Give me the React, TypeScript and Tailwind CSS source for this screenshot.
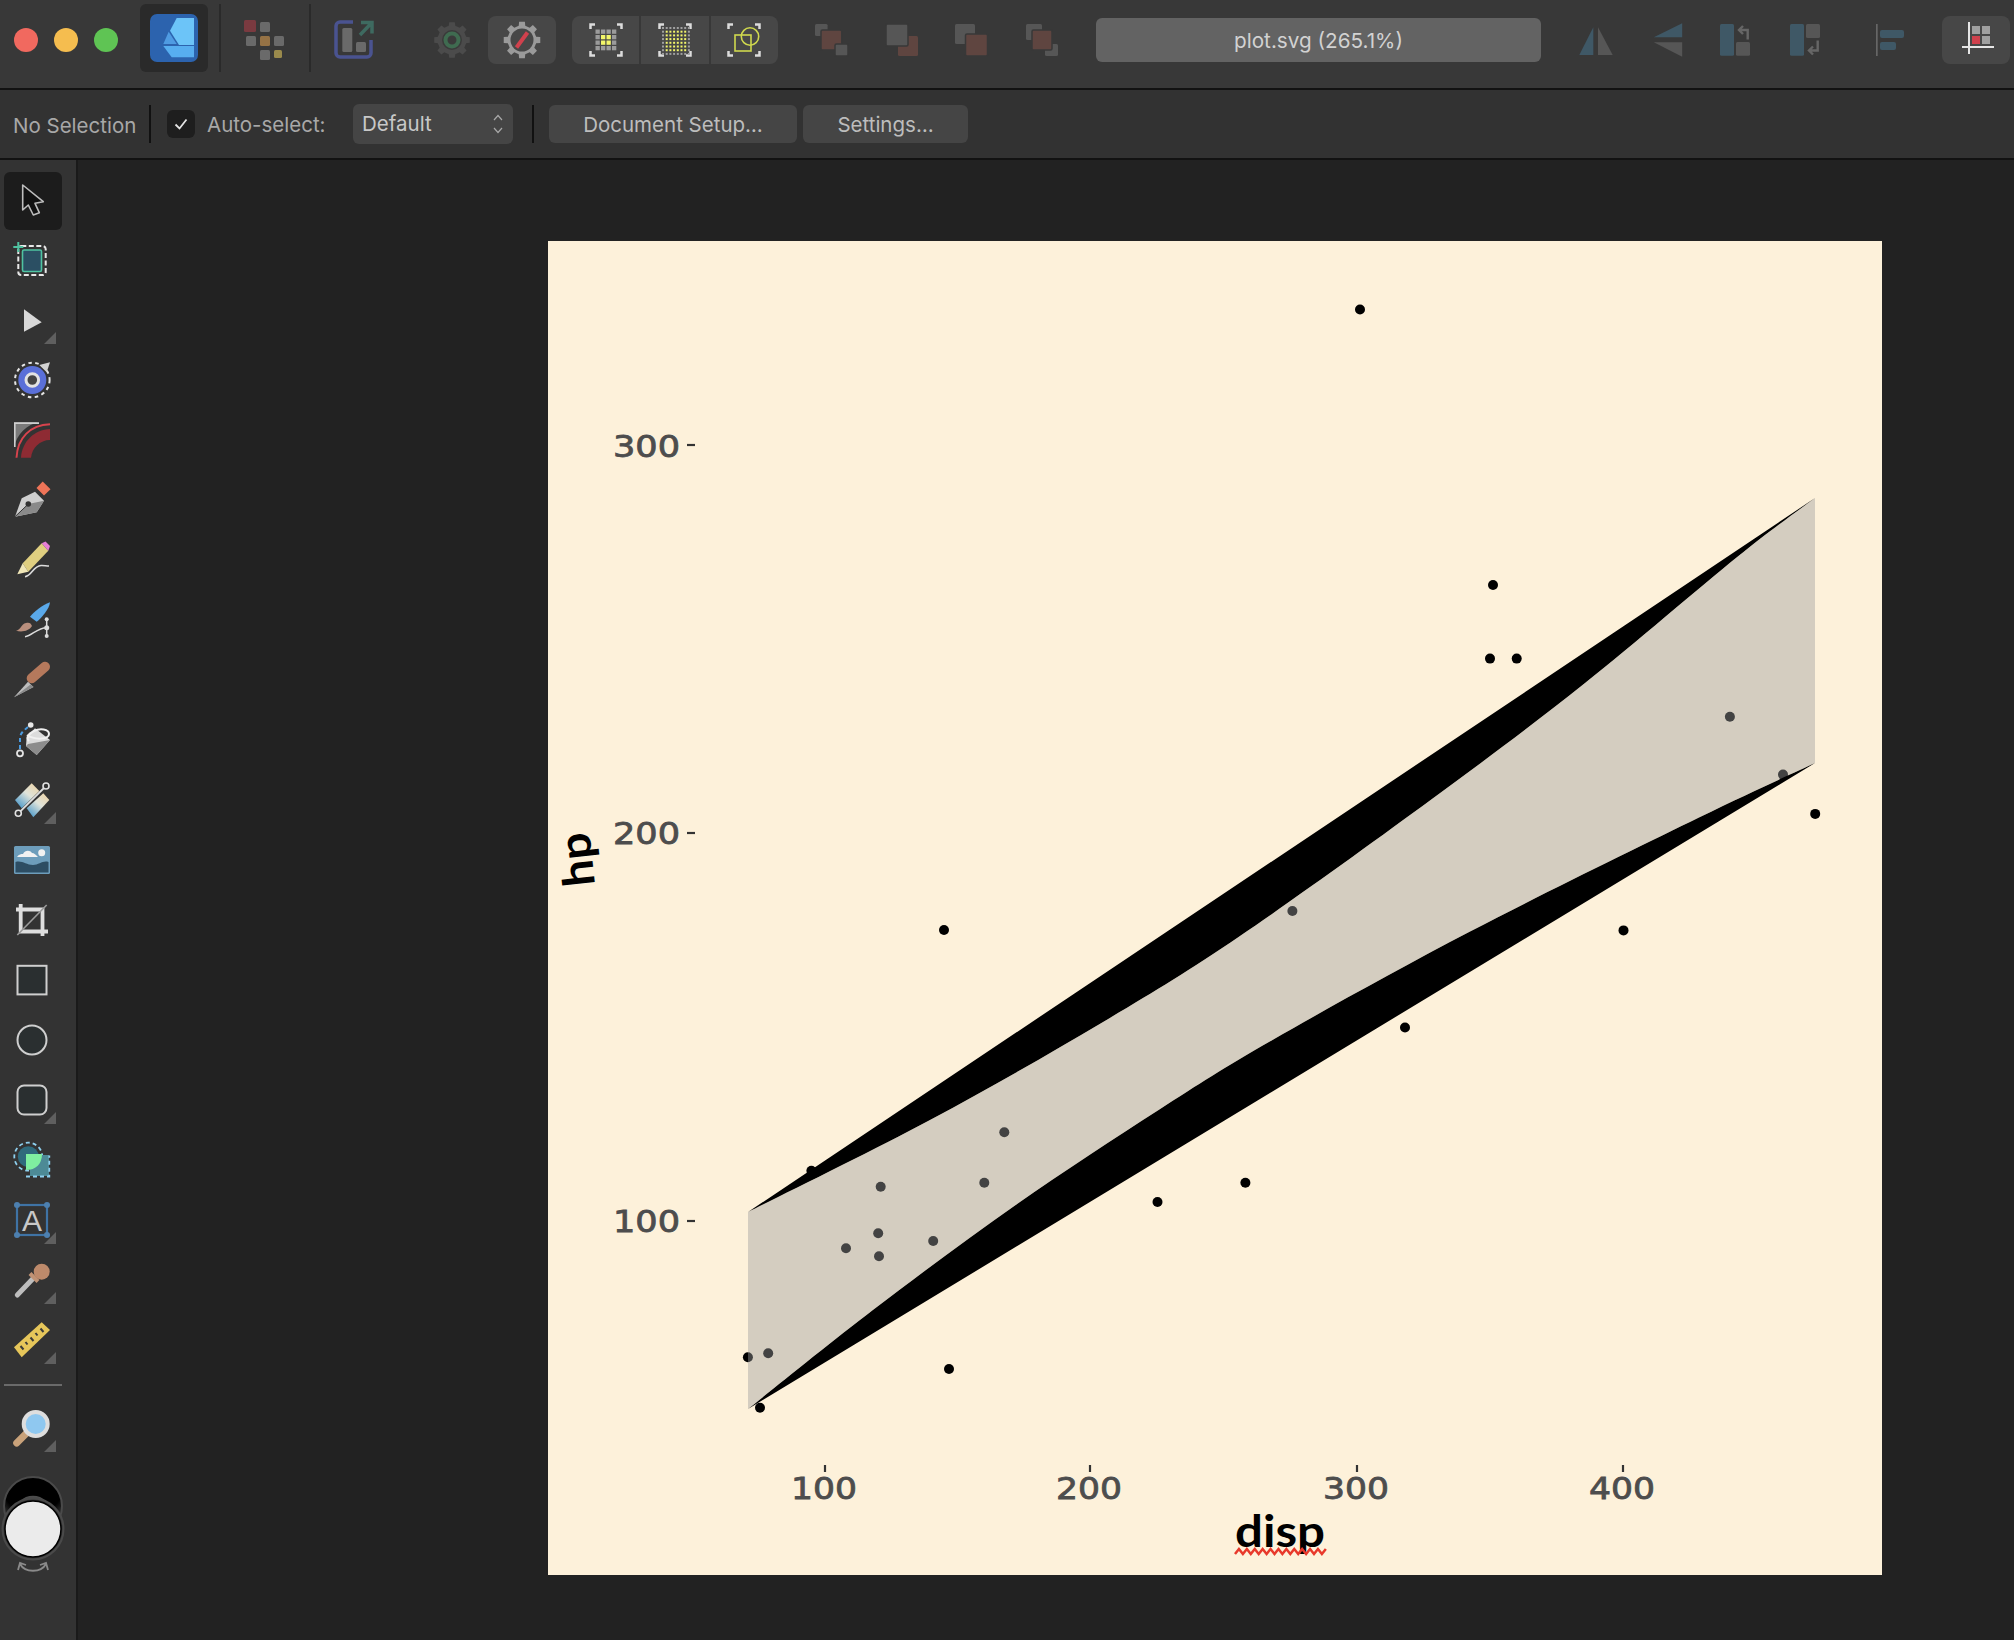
import React from "react";

const Ico = ({ children, size = 40 }: { children: React.ReactNode; size?: number }) => (
  <svg width={size} height={size} viewBox="0 0 40 40" fill="none" className="shrink-0 block">
    {children}
  </svg>
);

function gearPath(cx: number, cy: number, r: number, R: number, teeth: number) {
  const pts: string[] = [];
  const step = (Math.PI * 2) / teeth;
  for (let i = 0; i < teeth; i++) {
    const a = i * step - Math.PI / 2;
    const w = step * 0.2;
    const w2 = step * 0.29;
    const arr: [number, number][] = [
      [r, a - w2],
      [R, a - w],
      [R, a + w],
      [r, a + w2],
    ];
    arr.forEach(([rad, an]) => pts.push(`${(cx + rad * Math.cos(an)).toFixed(2)} ${(cy + rad * Math.sin(an)).toFixed(2)}`));
  }
  return "M" + pts.join("L") + "Z";
}

const Corners = () => (
  <g stroke="#dcdcdc" strokeWidth="2.5">
    <path d="M4.5 9V4.5H9M31 4.5H35.5V9M35.5 31V35.5H31M9 35.5H4.5V31" />
  </g>
);

const Grid4 = () => {
  const cells: React.ReactNode[] = [];
  for (let r = 0; r < 4; r++)
    for (let c = 0; c < 4; c++) {
      const y = (r === 1 || r === 2) && (c === 1 || c === 2);
      cells.push(<rect key={`${r}-${c}`} x={9.5 + c * 5.5} y={9.5 + r * 5.5} width="4.3" height="4.3" fill={y ? "#f2f56a" : "#9b9b9b"} />);
    }
  return <>{cells}</>;
};

const Grid8 = () => {
  const cells: React.ReactNode[] = [];
  for (let r = 0; r < 8; r++)
    for (let c = 0; c < 8; c++) {
      const edge = r === 0 || r === 7 || c === 0 || c === 7;
      cells.push(<rect key={`${r}-${c}`} x={7 + c * 3.7} y={7 + r * 3.7} width="2" height="2" fill={edge ? "#a0a0a0" : "#f2f56a"} />);
    }
  return <>{cells}</>;
};

const GRAY = "#565656";
const RED = "#5f4540";
const BLUE = "#3f5866";

const tools: { icon: React.ReactNode; tri?: boolean; active?: boolean }[] = [
  {
    active: true,
    icon: <path d="M10.7 5V30L16.3 25L21.3 35L27.3 32.7L23 23.3L31.3 21.7Z" fill="#111" stroke="#bdbdbd" strokeWidth="1.6" strokeLinejoin="round" />,
  },
  {
    icon: (
      <>
        <rect x="6.3" y="6" width="27.4" height="29" rx="3" stroke="#e8e8e8" strokeWidth="2" strokeDasharray="5 2.5" />
        <rect x="10.5" y="10" width="19" height="21.5" rx="1.5" fill="#2b4f63" stroke="#4fc3a1" strokeWidth="1.6" />
        <path d="M6.3 2V12M1.3 7H11.3" stroke="#4fc3a1" strokeWidth="2" />
      </>
    ),
  },
  { tri: true, icon: <path d="M12 9.3V31.7L29.7 22.3Z" fill="#d8d8d8" /> },
  {
    icon: (
      <>
        <circle cx="20.3" cy="20" r="17.3" stroke="#e4e4e4" strokeWidth="2" strokeDasharray="3.5 3.5" />
        <circle cx="20.3" cy="20" r="14" fill="#5a6fd8" />
        <circle cx="20.3" cy="20" r="6.3" fill="#444" stroke="#e2e2e2" strokeWidth="3" />
        <path d="M27.3 5L38 2.3L34.7 12.3Z" fill="#d2d2d2" />
      </>
    ),
  },
  {
    icon: (
      <>
        <path d="M2 2.3H27.3C15 4 5 14 2 27.3Z" fill="#7a7a7a" />
        <path d="M2.8 27V3.1H27" stroke="#cfcfcf" strokeWidth="1.6" />
        <path d="M9 37.7C10 22 22 9.5 38 9V20C28 20 20 28 19 37.7Z" fill="#8e2b33" />
        <path d="M4.5 37.7C5.5 18 18 5 38 4.3" stroke="#d8434d" strokeWidth="2" />
      </>
    ),
  },
  {
    icon: (
      <>
        <path d="M3 36.7L9.7 18.3L23 11.7L32 20.7L24.7 32.3Z" fill="#cfcfcf" />
        <path d="M3 36.7L16.3 24L32 20.7L24.7 32.3Z" fill="#8a8a8a" />
        <path d="M3 36.7L16.3 24" stroke="#333" strokeWidth="1" />
        <circle cx="16.3" cy="24" r="2.8" fill="#333" />
        <path d="M30.7 1.5L38.5 9.3L32 15.5L24.5 8Z" fill="#ee7458" />
      </>
    ),
  },
  {
    icon: (
      <>
        <path d="M10.7 23.3L29.7 3.3L36.3 10.7L16.3 31.7Z" fill="#e0cf80" />
        <path d="M10.7 23.3L16.3 31.7L5.3 34.3Z" fill="#f1e7b8" />
        <path d="M29.7 3.3L33.5 1.5L38 6L36.3 10.7Z" fill="#e77fd6" />
        <path d="M13 36.7C20 36 21 26 29 25.5C32 25.3 34 26 37 26" stroke="#dcdcdc" strokeWidth="1.6" />
      </>
    ),
  },
  {
    icon: (
      <>
        <path d="M18 16.7C22 12 30 5 38 2.3C37.5 6 36 9 33 13C30 17 27 20 24.7 21.7Z" fill="#5aa9ea" />
        <path d="M4 30.7C9 30 9 24 14 23C17 22 19 23 20 26C17 31 10 32.5 4 30.7Z" fill="#b98f7d" />
        <path d="M34.7 19.3V36M13 36.7C20 36 25 27.7 34.7 27.7" stroke="#dcdcdc" strokeWidth="1.5" />
        <circle cx="34.7" cy="19.3" r="2" fill="#dcdcdc" />
        <circle cx="34.7" cy="27.7" r="2.5" fill="#dcdcdc" />
        <circle cx="34.7" cy="36" r="2" fill="#dcdcdc" />
      </>
    ),
  },
  {
    icon: (
      <>
        <path d="M19.7 18.3L33 6.7" stroke="#b5795c" strokeWidth="10" strokeLinecap="round" />
        <path d="M2 37.3L16 21.7L21.5 27Z" fill="#bdbdbd" />
        <path d="M2 37.3L18.5 24.5L21.5 27Z" fill="#8a8a8a" />
      </>
    ),
  },
  {
    icon: (
      <>
        <path d="M14.7 16.7L23 8.3L38 20L24.7 35L14 26Z" fill="#dcdcdc" />
        <path d="M16 24L38 20L24.7 35L14 26Z" fill="#8c8c8c" />
        <path d="M15 15C22 20 37 20 37 14C37 9 28 8 22 11C16 14 14 18 17 21" stroke="#f0f0f0" strokeWidth="2" />
        <circle cx="8" cy="33.3" r="3" fill="#333" stroke="#e4e4e4" strokeWidth="1.8" />
        <circle cx="18.7" cy="5" r="2.8" fill="#e8e8e8" />
        <path d="M8 29V18C8 14 11 11 16 7" stroke="#4a9be0" strokeWidth="2" strokeDasharray="4 3" />
      </>
    ),
  },
  {
    tri: true,
    icon: (
      <>
        <defs>
          <linearGradient id="gr1" x1="0.9" y1="0" x2="0.1" y2="1">
            <stop offset="0" stopColor="#ecd3a6" />
            <stop offset="0.45" stopColor="#dfe3da" />
            <stop offset="1" stopColor="#3f93c8" />
          </linearGradient>
        </defs>
        <path d="M3 20L19.7 3.3L27.3 11L9.7 28.3Z" fill="url(#gr1)" />
        <path d="M14.7 28.3L31.3 13.3L37.3 20L21.3 37.3Z" fill="url(#gr1)" />
        <path d="M6.3 33.3L34 6" stroke="#dedede" strokeWidth="1.8" />
        <circle cx="6.3" cy="33.3" r="3" fill="#333" stroke="#e2e2e2" strokeWidth="1.6" />
        <circle cx="34" cy="6" r="3" fill="#333" stroke="#e2e2e2" strokeWidth="1.6" />
      </>
    ),
  },
  {
    icon: (
      <>
        <rect x="2" y="6" width="36" height="28" rx="1.5" fill="#6d9dbb" />
        <path d="M5 17C7 14 9 14 11 14C13 10 18 10 20 13C22 13 24 15 26 17Z" fill="#f2f2f2" />
        <circle cx="29.7" cy="12.7" r="3.5" fill="#f2f2f2" />
        <path d="M3.5 22C10 20 14 25 21 25C27 25 31 20 36.5 22V32.5H3.5Z" fill="#2d4d63" />
      </>
    ),
  },
  {
    icon: (
      <>
        <path d="M8.7 4V31.5H36M4 9.5H30.5V36" stroke="#dedede" strokeWidth="3.8" />
        <path d="M5.3 35L34.7 5" stroke="#9a9a9a" strokeWidth="1.6" />
      </>
    ),
  },
  { icon: <rect x="5.5" y="5.8" width="29" height="28.6" fill="#2a2f30" stroke="#cfcfcf" strokeWidth="2" /> },
  { icon: <circle cx="20" cy="20" r="14.5" fill="#2a2f30" stroke="#cfcfcf" strokeWidth="2" /> },
  { tri: true, icon: <rect x="5.5" y="5.5" width="29" height="29" rx="6.5" fill="#2a2f30" stroke="#cfcfcf" strokeWidth="2" /> },
  {
    icon: (
      <>
        <circle cx="16.3" cy="16.7" r="14" stroke="#8ed0ef" strokeWidth="1.8" strokeDasharray="4 3" />
        <circle cx="16.3" cy="16.7" r="10.5" fill="#2f6a7c" />
        <path d="M18 36V25C25 24 29 20 30 15H37V36Z" fill="#4d8a96" />
        <path d="M14 36.5H37.3V15.5" stroke="#8ed0ef" strokeWidth="1.8" strokeDasharray="4 3" />
        <path d="M14 14H30C30 24 24 30 14 30Z" fill="#7fefa0" />
      </>
    ),
  },
  {
    tri: true,
    icon: (
      <>
        <rect x="5" y="5" width="30" height="30" stroke="#3f73a5" strokeWidth="2.2" />
        <circle cx="5" cy="5" r="3" fill="#4d80b0" />
        <circle cx="35" cy="5" r="3" fill="#4d80b0" />
        <circle cx="5" cy="35" r="3" fill="#4d80b0" />
        <circle cx="35" cy="35" r="3" fill="#4d80b0" />
        <text x="20" y="30.5" textAnchor="middle" fontFamily="'Liberation Sans', sans-serif" fontSize="30" fill="#c8c8c8">A</text>
      </>
    ),
  },
  {
    tri: true,
    icon: (
      <>
        <path d="M5.3 35L21.3 18.3" stroke="#bdbdbd" strokeWidth="5" strokeLinecap="round" />
        <path d="M18 13.5L26 21.5" stroke="#c09274" strokeWidth="4" />
        <circle cx="29.7" cy="11.7" r="8" fill="#bd8a6b" />
      </>
    ),
  },
  {
    tri: true,
    icon: (
      <>
        <path d="M2 27.3L29.7 2.3L38 10L9.7 37.3Z" fill="#e6c65a" />
        <path d="M8.5 26L11.5 29.5M13.5 22L15.5 24.5M18.5 17.5L21.5 21M23.5 13L25.5 15.5M28.5 8.5L31.5 12" stroke="#3b3b3b" strokeWidth="2" />
      </>
    ),
  },
];

const Tool = ({ icon, tri, active }: { icon: React.ReactNode; tri?: boolean; active?: boolean }) => (
  <div className={`relative flex h-[58px] w-[58px] items-center justify-center rounded-md pb-[2px] pr-[2px] ${active ? "bg-[#1c1c1c]" : ""}`}>
    <Ico>{icon}</Ico>
    {tri && <Tri />}
  </div>
);

const Tri = () => (
  <svg width="12" height="12" viewBox="0 0 12 12" className="absolute left-[40px] top-[40px]">
    <path d="M12 0V12H0Z" fill="#5f5f5f" />
  </svg>
);

const Sep = () => <div className="h-[68px] w-[2px] shrink-0 bg-[#2a2a2a]" />;

function zigzag() {
  const p: string[] = [];
  for (let i = 0; i <= 23; i++) p.push(`${1235 + i * 3.95},${i % 2 ? 1549 : 1554}`);
  return p.join(" ");
}

const blackPts: [number, number][] = [
  [811.4, 1170.7], [1004.3, 1132.3], [880.7, 1186.7], [984.3, 1182.7], [878.2, 1233.3], [846, 1248.3], [879, 1256.3], [933.2, 1241],
  [747.9, 1357.3], [768.2, 1353.3], [760, 1407.7], [949, 1369], [1157.5, 1202], [1245.4, 1182.7], [1493, 585], [1490, 658.6],
  [1516.7, 658.6], [1729.9, 716.8], [1783, 774.6], [1815.2, 813.9], [1623.5, 930.4], [1405, 1027.5], [1292.4, 911], [1360, 309.5], [944, 930],
];

type P = [number, number];
const upperPts: P[] = [
  [748, 1212], [930, 1120], [1101.4, 1023], [1240, 936], [1431.3, 799.6], [1584.4, 683.6], [1737.5, 556.8], [1815, 498],
];
const lowerPts: P[] = [
  [1815, 763], [1699, 817.5], [1469.6, 931.8], [1272.5, 1040], [1158.6, 1110], [1015.7, 1205], [872.9, 1310], [748, 1409],
];

// Catmull-Rom spline through measured ribbon edge points
function spline(pts: P[]) {
  let d = "";
  for (let i = 0; i < pts.length - 1; i++) {
    const p0 = pts[Math.max(i - 1, 0)];
    const p1 = pts[i];
    const p2 = pts[i + 1];
    const p3 = pts[Math.min(i + 2, pts.length - 1)];
    const c1x = p1[0] + (p2[0] - p0[0]) / 6;
    const c1y = p1[1] + (p2[1] - p0[1]) / 6;
    const c2x = p2[0] - (p3[0] - p1[0]) / 6;
    const c2y = p2[1] - (p3[1] - p1[1]) / 6;
    d += `C${c1x.toFixed(1)} ${c1y.toFixed(1)} ${c2x.toFixed(1)} ${c2y.toFixed(1)} ${p2[0]} ${p2[1]}`;
  }
  return d;
}

const upperD = spline(upperPts);
const lowerD = spline(lowerPts);
const upperRevD = spline([...upperPts].reverse());
const lowerRevD = spline([...lowerPts].reverse());

const tickY = [
  { l: "300", y: 445, top: 457 },
  { l: "200", y: 833, top: 844 },
  { l: "100", y: 1221, top: 1232 },
];
const tickX = [
  { l: "100", x: 825 },
  { l: "200", x: 1090 },
  { l: "300", x: 1357 },
  { l: "400", x: 1623 },
];

const axisFont = "'DejaVu Sans', sans-serif";
const titleFont = "'Lato', sans-serif";

const Plot = () => (
  <svg width="1334" height="1334" viewBox="548 241 1334 1334" className="block bg-[#fdf1da]">
    <path d={`M748 1212L1815 498${upperRevD}Z`} fill="#000" />
    <path d={`M1815 763L748 1409${lowerRevD}Z`} fill="#000" />
    {blackPts.map(([x, y], i) => (
      <circle key={i} cx={x} cy={y} r="5" fill="#000" />
    ))}
    <path d={`M748 1212${upperD}L1815 763${lowerD}Z`} fill="#9d9d9d" fillOpacity="0.427" />
    {tickY.map((t) => (
      <g key={t.l}>
        <path d={`M687 ${t.y}H695`} stroke="#333" strokeWidth="2.2" />
        <text x="613" y={t.top} fontFamily={axisFont} fontSize="30" fill="#4d4d4d" stroke="#4d4d4d" strokeWidth="0.8" textLength="67" lengthAdjust="spacingAndGlyphs">
          {t.l}
        </text>
      </g>
    ))}
    {tickX.map((t) => (
      <g key={t.l}>
        <path d={`M${t.x} 1465V1472`} stroke="#333" strokeWidth="2.2" />
        <text x={t.x - 34} y="1499" fontFamily={axisFont} fontSize="30" fill="#4d4d4d" stroke="#4d4d4d" strokeWidth="0.8" textLength="66" lengthAdjust="spacingAndGlyphs">
          {t.l}
        </text>
      </g>
    ))}
    <text x="1235" y="1547" fontFamily={titleFont} fontWeight="700" fontSize="44" fill="#000" textLength="90" lengthAdjust="spacingAndGlyphs">
      disp
    </text>
    <polyline points={zigzag()} fill="none" stroke="#e8392b" strokeWidth="2.5" />
    <text transform="translate(595 885) rotate(-96)" fontFamily={titleFont} fontWeight="700" fontSize="44" fill="#000" textLength="54" lengthAdjust="spacingAndGlyphs">
      hp
    </text>
  </svg>
);

export default function App() {
  const gear1 = gearPath(20, 20, 14.5, 18, 8);
  const gear2 = gearPath(20, 20, 14.5, 18.5, 8);
  return (
    <div className="flex h-[1640px] w-[2014px] flex-col overflow-hidden bg-[#222222] font-['Inter','Liberation_Sans',sans-serif]">
      {/* Top toolbar */}
      <div className="flex h-[88px] shrink-0 items-center bg-[#383838] pb-[8px] pl-[14px]">
        <div className="flex gap-[16px]">
          <div className="h-[24px] w-[24px] rounded-full bg-[#f1695f]" />
          <div className="h-[24px] w-[24px] rounded-full bg-[#f5bd4f]" />
          <div className="h-[24px] w-[24px] rounded-full bg-[#5fc454]" />
        </div>
        <div className="ml-[22px] mt-[-4px] flex h-[68px] w-[68px] shrink-0 items-center justify-center rounded-md bg-[#2a2a2a]">
          <svg width="48" height="48" viewBox="0 0 48 48" className="block">
            <rect width="48" height="48" rx="7" fill="#2c63ae" />
            <path d="M26.7 4H44V31H29L20 16.7Z" fill="#6cc4f8" />
            <path d="M18.7 17.7L26.7 30H13.3Z" fill="#4f9be2" />
            <path d="M13.3 32H44V43.3H21.7Z" fill="#57aef0" />
          </svg>
        </div>
        <div className="ml-[11px] mt-[-4px]"><Sep /></div>
        <div className="ml-[23px]">
          <Ico>
            <rect x="0" y="0" width="12" height="12" rx="1.5" fill="#7a3a40" />
            <rect x="16" y="2" width="10" height="10" rx="1.5" fill="#6a6a6a" />
            <rect x="2" y="16" width="10" height="10" rx="1.5" fill="#6a6a6a" />
            <rect x="16" y="16" width="10" height="10" rx="1.5" fill="#957245" />
            <rect x="30" y="16" width="10" height="10" rx="1.5" fill="#6a6a6a" />
            <rect x="16" y="30" width="10" height="10" rx="1.5" fill="#6a6a6a" />
            <rect x="30" y="30" width="8" height="8" rx="1.5" fill="#9a8a4c" />
          </Ico>
        </div>
        <div className="ml-[25px] mt-[-4px]"><Sep /></div>
        <div className="ml-[23px]">
          <Ico>
            <path d="M19 2H6A4 4 0 0 0 2 6V33A4 4 0 0 0 6 37H33A4 4 0 0 0 37 33V20" stroke="#4a5390" strokeWidth="3.5" />
            <rect x="8.3" y="8" width="10" height="24" rx="1.5" fill="#6a6a6a" />
            <rect x="22" y="22" width="10" height="10" rx="1.5" fill="#6a6a6a" />
            <path d="M26 15L37.5 3M27 2.5H38V13.5" stroke="#3e6a60" strokeWidth="3.5" />
          </Ico>
        </div>
        <div className="ml-[58px]">
          <Ico>
            <path d={gear1} fill="#4b4b4b" />
            <circle cx="20" cy="20" r="10" fill="#3a3a3a" />
            <circle cx="20" cy="20" r="6.5" stroke="#3f6b50" strokeWidth="4" />
          </Ico>
        </div>
        <div className="ml-[16px] flex h-[48px] w-[68px] shrink-0 items-center justify-center rounded-lg bg-[#474747]">
          <Ico>
            <path d={gear2} fill="#9a9a9a" />
            <circle cx="20" cy="20" r="11.5" fill="#474747" />
            <path d="M25.5 12.5L14.5 27.5" stroke="#d0414d" strokeWidth="4" />
          </Ico>
        </div>
        <div className="ml-[16px] flex h-[48px] w-[206px] shrink-0 divide-x-2 divide-[#383838] overflow-hidden rounded-lg bg-[#474747]">
          <div className="flex flex-1 items-center justify-center">
            <Ico><Corners /><Grid4 /></Ico>
          </div>
          <div className="flex flex-1 items-center justify-center">
            <Ico><Corners /><Grid8 /></Ico>
          </div>
          <div className="flex flex-1 items-center justify-center">
            <Ico>
              <Corners />
              <rect x="11" y="15" width="16" height="16" stroke="#cfd84e" strokeWidth="1.6" />
              <circle cx="26" cy="16.5" r="8.7" stroke="#cfd84e" strokeWidth="1.6" />
            </Ico>
          </div>
        </div>
        <div className="ml-[34px]">
          <Ico>
            <rect x="3" y="4" width="12.6" height="12" rx="1.5" fill={GRAY} />
            <rect x="9" y="10" width="20.7" height="20" rx="1.5" fill={RED} stroke="#383838" strokeWidth="1.5" />
            <rect x="23" y="24" width="13" height="12" rx="1.5" fill={GRAY} stroke="#383838" strokeWidth="1.5" />
          </Ico>
        </div>
        <div className="ml-[30px]">
          <Ico>
            <rect x="16" y="16" width="20" height="20" rx="1.5" fill={RED} />
            <rect x="4" y="4" width="22" height="22" rx="1.5" fill={GRAY} stroke="#383838" strokeWidth="1.5" />
          </Ico>
        </div>
        <div className="ml-[29px]">
          <Ico>
            <rect x="4" y="4" width="20" height="20" rx="1.5" fill={GRAY} />
            <rect x="14.5" y="14" width="22" height="22" rx="1.5" fill={RED} stroke="#383838" strokeWidth="1.5" />
          </Ico>
        </div>
        <div className="ml-[31px]">
          <Ico>
            <rect x="4" y="4" width="16" height="16" rx="1.5" fill={GRAY} />
            <rect x="23" y="24" width="13" height="12" rx="1.5" fill={GRAY} />
            <rect x="10" y="10" width="20" height="20" rx="1.5" fill={RED} stroke="#383838" strokeWidth="1.5" />
          </Ico>
        </div>
        <div className="ml-[34px] flex h-[44px] w-[445px] shrink-0 items-center justify-center rounded-md bg-[#636363] pt-[2px] text-[20.7px] text-[#d2d2d2]">
          plot.svg (265.1%)
        </div>
        <div className="ml-[35px]">
          <Ico>
            <path d="M3.3 35H17.3V7.3Z" fill={BLUE} />
            <path d="M22 7.3V35H36.7Z" fill={GRAY} />
          </Ico>
        </div>
        <div className="ml-[32px]">
          <Ico>
            <path d="M34.2 3.3V17.3H5.8Z" fill={BLUE} />
            <path d="M5.8 22.3H34.2V36.7Z" fill={GRAY} />
          </Ico>
        </div>
        <div className="ml-[27px]">
          <Ico>
            <rect x="5" y="4" width="14" height="31.7" rx="1.5" fill={BLUE} />
            <rect x="21" y="22" width="14" height="13.7" rx="1.5" fill={GRAY} />
            <path d="M32.7 19.5V10H25M28 6L24 10L28 14" stroke="#666" strokeWidth="2.4" />
          </Ico>
        </div>
        <div className="ml-[30px]">
          <Ico>
            <rect x="5" y="4" width="14" height="31.7" rx="1.5" fill={BLUE} />
            <rect x="21" y="4" width="14" height="14" rx="1.5" fill={GRAY} />
            <path d="M32.7 20.5V30.5H25M28 26.5L24 30.5L28 34.5" stroke="#666" strokeWidth="2.4" />
          </Ico>
        </div>
        <div className="ml-[45px]">
          <Ico>
            <rect x="6" y="4" width="1.7" height="32" fill="#666" />
            <rect x="10" y="10" width="24" height="8" rx="2" fill={BLUE} />
            <rect x="10" y="22" width="16" height="8" rx="2" fill={BLUE} />
          </Ico>
        </div>
        <div className="ml-[32px] flex h-[48px] w-[68px] shrink-0 items-center justify-center rounded-lg bg-[#474747]">
          <Ico>
            <rect x="16" y="6" width="8" height="8" fill="#a0a0a0" />
            <rect x="26" y="6" width="8" height="8" fill="#a0a0a0" />
            <rect x="16" y="16" width="8" height="8" fill="#d0414d" />
            <rect x="26" y="16" width="8" height="8" fill="#a0a0a0" />
            <path d="M13 2V34M6 27H38" stroke="#e6e6e6" strokeWidth="2" />
          </Ico>
        </div>
      </div>
      <div className="h-[2px] shrink-0 bg-[#121212]" />

      {/* Context bar */}
      <div className="flex h-[68px] shrink-0 items-center bg-[#323232] text-[20.5px] text-[#a8a8a8]">
        <span className="ml-[13px] w-[122px] shrink-0 whitespace-nowrap pt-[4px]">No Selection</span>
        <div className="ml-[14px] h-[38px] w-[2px] shrink-0 bg-[#111]" />
        <div className="ml-[16px] flex h-[28px] w-[28px] shrink-0 items-center justify-center rounded-md bg-[#1e1e1e]">
          <svg width="16" height="14" viewBox="0 0 16 14" fill="none" className="block">
            <path d="M2.5 7.5L6.5 11.5L13.5 2.5" stroke="#e4e4e4" strokeWidth="1.8" />
          </svg>
        </div>
        <span className="ml-[12px] w-[117px] shrink-0 whitespace-nowrap pt-[2px]">Auto-select:</span>
        <div className="ml-[29px] flex h-[40px] w-[160px] shrink-0 items-center justify-between rounded-md bg-[#454545] pl-[9px] pr-[9px] text-[#c8c8c8]">
          <span>Default</span>
          <svg width="12" height="24" viewBox="0 0 12 24" fill="none" className="block">
            <path d="M2 8L6 3.5L10 8M2 16L6 20.5L10 16" stroke="#a8a8a8" strokeWidth="1.2" />
          </svg>
        </div>
        <div className="ml-[19px] h-[38px] w-[2px] shrink-0 bg-[#111]" />
        <div className="ml-[15px] flex h-[38px] w-[248px] shrink-0 items-center justify-center rounded-md bg-[#454545] pt-[2px] text-[#bdbdbd]">
          Document Setup…
        </div>
        <div className="ml-[6px] flex h-[38px] w-[165px] shrink-0 items-center justify-center rounded-md bg-[#454545] pt-[2px] text-[#bdbdbd]">
          Settings…
        </div>
      </div>
      <div className="h-[2px] shrink-0 bg-[#121212]" />

      {/* Main */}
      <div className="flex min-h-0 flex-1">
        <div className="flex w-[78px] shrink-0 flex-col border-r-2 border-[#1a1a1a] bg-[#333333] pl-[4px] pt-[12px]">
          <div className="flex flex-col gap-[2px]">
            {tools.map((t, i) => (
              <Tool key={i} {...t} />
            ))}
          </div>
          <div className="my-[14px] h-[2px] w-[58px] shrink-0 bg-[#6a6a6a]" />
          <Tool
            tri
            icon={
              <>
                <path d="M14.7 25L4.7 35" stroke="#c9a27a" strokeWidth="7" strokeLinecap="round" />
                <circle cx="23.7" cy="16" r="12" fill="#8fc8f0" stroke="#dedede" strokeWidth="4" />
              </>
            }
          />
          <div className="ml-[-4px] mt-[18px]">
            <svg width="66" height="104" viewBox="0 0 66 104" fill="none" className="block">
              <defs>
                <radialGradient id="bk" cx="0.5" cy="0.1" r="0.9">
                  <stop offset="0" stopColor="#000" />
                  <stop offset="0.6" stopColor="#000" />
                  <stop offset="1" stopColor="#666" />
                </radialGradient>
              </defs>
              <circle cx="33" cy="30" r="29" fill="url(#bk)" stroke="#4a4a4a" strokeWidth="2" />
              <circle cx="33" cy="38" r="17" stroke="#4d4d4d" strokeWidth="2.5" />
              <circle cx="33" cy="53" r="30.5" fill="#333" stroke="#4a4a4a" strokeWidth="2" />
              <circle cx="33" cy="53" r="28" fill="#ebebeb" stroke="#000" strokeWidth="1.5" />
              <path d="M20 88C25 97 41 97 46 88M18 94L20 87L26 89M48 94L46 87L40 89" stroke="#8a8a8a" strokeWidth="1.8" />
            </svg>
          </div>
        </div>
        <div className="flex-1 pl-[470px] pt-[81px]">
          <Plot />
        </div>
      </div>
    </div>
  );
}
